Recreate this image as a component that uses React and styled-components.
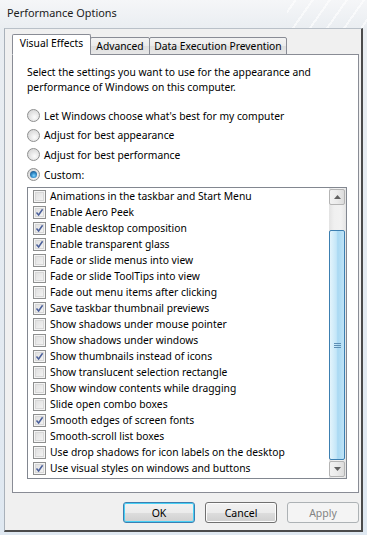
import React from "react";
import styled, { createGlobalStyle } from "styled-components";

const Global = createGlobalStyle`
  html, body { margin: 0; padding: 0; }
  body {
    width: 367px; height: 535px; overflow: hidden;
    font-family: "Noto Sans", "Open Sans", sans-serif;
    font-size: 10.3px;
    background: #e4ebf2;
  }
`;

const Window = styled.div`
  width: 367px; height: 535px; box-sizing: border-box;
  display: flex; flex-direction: column;
  background:
    repeating-linear-gradient(125deg, rgba(255,255,255,0) 0 6px, rgba(255,255,255,0.6) 6px 8px, rgba(255,255,255,0) 8px 14px) right top / 80px 28px no-repeat,
    linear-gradient(180deg, #f5f6f8 0%, #e9edf1 30px, #dfe8f1 100%);
`;

const TitleBar = styled.div`
  height: 28px; flex: none; display: flex; align-items: center;
  padding: 0 0 3px 7px; box-sizing: border-box;
  font-size: 10.9px; color: #1b1b1b;
`;

const Client = styled.div`
  flex: 1; margin: 0 4px 3px 4px;
  background: #f0f0f0;
  border-left: 1px solid #a9b1ba;
  border-top: 1px solid #b9c0c8;
  border-right: 2px solid #4b4b4b;
  border-bottom: 2px solid #4b4b4b;
  display: flex; flex-direction: column;
  padding: 6px 2px 0 7px;
`;

const TabRow = styled.div`
  display: flex; align-items: flex-end; height: 20px;
  margin-bottom: -1px; position: relative; z-index: 1;
`;

const Tab = styled.div`
  box-sizing: border-box; white-space: nowrap;
  width: ${p => p.$w}px;
  height: ${p => (p.$active ? "21px" : "18px")};
  margin-left: ${p => (p.$active ? "0" : "-1px")};
  border: 1px solid #898c95;
  border-bottom-color: ${p => (p.$active ? "#fff" : "#898c95")};
  border-radius: 2px 2px 0 0;
  background: ${p => (p.$active ? "#fff" : "linear-gradient(#f3f3f3, #ebebeb 50%, #dedede 51%, #e7e7e7)")};
  color: #000;
  display: flex; align-items: center; justify-content: center;
  padding-bottom: ${p => (p.$active ? "3px" : "1px")};
`;

const Panel = styled.div`
  box-sizing: border-box;
  width: 347px; height: 439px;
  background: #fff;
  border: 1px solid #898c95;
  padding: 10px 0 0 14px;
  display: flex; flex-direction: column;
`;

const Intro = styled.p`
  margin: 0; line-height: 15px; color: #000; width: 320px;
`;

const RadioGroup = styled.div`
  margin-top: 11px; display: flex; flex-direction: column;
`;

const RadioRow = styled.label`
  height: 19.6px; display: flex; align-items: center; gap: 4px;
  color: #000;
`;

const RadioDot = styled.span`
  width: 13px; height: 13px; box-sizing: border-box; border-radius: 50%;
  border: 1px solid #8e8f8f;
  background: radial-gradient(circle at 60% 65%, #fcfcfc 0%, #e6e6e6 45%, #cfcfcf 100%);
  display: flex; align-items: center; justify-content: center; flex: none;
  &::after {
    content: ""; display: ${p => (p.$on ? "block" : "none")};
    width: 7px; height: 7px; border-radius: 50%;
    background: radial-gradient(circle at 55% 65%, #7dd4ff 0%, #2f86c4 45%, #163f6a 100%);
  }
`;

const ListBox = styled.div`
  margin-top: 3px;
  width: 320px; height: 292px; box-sizing: border-box;
  border: 1px solid #828790;
  display: flex; background: #fff;
`;

const Items = styled.div`
  flex: 1; display: flex; flex-direction: column;
`;

const ItemRow = styled.div`
  height: 16px; display: flex; align-items: center; gap: 4px;
  padding-left: 5px; color: #000; white-space: nowrap;
`;

const CheckBox = styled.span`
  width: 13px; height: 13px; box-sizing: border-box; flex: none;
  border: 1px solid #8e8f8f;
  display: flex; align-items: center; justify-content: center;
  box-shadow: inset 0 0 0 1px #f4f4f4, inset 0 0 0 2px #d8d8d8;
  background: linear-gradient(135deg, #dcdcdc, #f7f7f7);
`;

const ScrollBar = styled.div`
  width: 17px; flex: none; box-sizing: border-box;
  background: linear-gradient(90deg, #e3e3e3, #f0f0f0 30%, #f2f2f2 70%, #e5e5e5);
  padding: 1px 1px 1px 0;
  display: flex; flex-direction: column;
`;

const ArrowBtn = styled.div`
  height: 16px; flex: none; box-sizing: border-box;
  border: 1px solid #b4b4b4; border-radius: 2px;
  background: linear-gradient(90deg, #f2f2f2, #ebebeb 50%, #dcdcdc);
  display: flex; align-items: center; justify-content: center;
`;

const Track = styled.div`
  flex: 1; display: flex; flex-direction: column;
  padding: 25px 0 1px 0;
`;

const Thumb = styled.div`
  flex: 1; box-sizing: border-box;
  border: 1px solid #3c7fb1; border-radius: 2px;
  background: linear-gradient(90deg, #e3f4fc, #c4e6f8 45%, #a9d9f3 55%, #bfe3f6);
  display: flex; align-items: center; justify-content: center;
`;

const Footer = styled.div`
  display: flex; justify-content: flex-end; gap: 10px;
  padding: 9px 0 0 0;
`;

const Button = styled.button`
  width: 72px; height: 21px; box-sizing: border-box;
  font-family: inherit; font-size: 10.5px; padding: 0;
  border-radius: 3px;
  border: 1px solid ${p => (p.$default ? "#3c7fb1" : p.disabled ? "#adb2b5" : "#707070")};
  color: ${p => (p.disabled ? "#838383" : "#000")};
  background: ${p => (p.disabled ? "#f4f4f4" : "linear-gradient(#f2f2f2, #ebebeb 50%, #dddddd 51%, #cfcfcf)")};
  box-shadow: ${p => (p.$default ? "inset 0 0 0 1px #48d0f5" : p.disabled ? "none" : "inset 0 0 0 1px #fcfcfc")};
`;

const items = [
  ["Animations in the taskbar and Start Menu", false],
  ["Enable Aero Peek", true],
  ["Enable desktop composition", true],
  ["Enable transparent glass", true],
  ["Fade or slide menus into view", false],
  ["Fade or slide ToolTips into view", false],
  ["Fade out menu items after clicking", false],
  ["Save taskbar thumbnail previews", true],
  ["Show shadows under mouse pointer", false],
  ["Show shadows under windows", false],
  ["Show thumbnails instead of icons", true],
  ["Show translucent selection rectangle", false],
  ["Show window contents while dragging", false],
  ["Slide open combo boxes", false],
  ["Smooth edges of screen fonts", true],
  ["Smooth-scroll list boxes", false],
  ["Use drop shadows for icon labels on the desktop", false],
  ["Use visual styles on windows and buttons", true],
];

const radios = [
  ["Let Windows choose what's best for my computer", false],
  ["Adjust for best appearance", false],
  ["Adjust for best performance", false],
  ["Custom:", true],
];

const Check = () => (
  <svg width="9" height="9" viewBox="0 0 9 9">
    <path d="M1.5 4.6 L3.6 7 L7.6 1.3" fill="none" stroke="#4a5f9a" strokeWidth="1.5" />
  </svg>
);

const Arrow = ({ up }) => (
  <svg width="7" height="4" viewBox="0 0 7 4">
    <path d={up ? "M0 4 L3.5 0 L7 4 Z" : "M0 0 L3.5 4 L7 0 Z"} fill="#606060" />
  </svg>
);

const Grip = () => (
  <svg width="7" height="7" viewBox="0 0 7 7">
    <path d="M0 1.5H7M0 3.5H7M0 5.5H7" stroke="#5e8fb5" strokeWidth="1" />
  </svg>
);

export default function App() {
  return (
    <>
      <Global />
      <Window>
        <TitleBar>Performance Options</TitleBar>
        <Client>
          <TabRow>
            <Tab $active $w={79}>Visual Effects</Tab>
            <Tab $w={60}>Advanced</Tab>
            <Tab $w={138}>Data Execution Prevention</Tab>
          </TabRow>
          <Panel>
            <Intro>
              Select the settings you want to use for the appearance and
              performance of Windows on this computer.
            </Intro>
            <RadioGroup>
              {radios.map(([t, on]) => (
                <RadioRow key={t}>
                  <RadioDot $on={on} />
                  {t}
                </RadioRow>
              ))}
            </RadioGroup>
            <ListBox>
              <Items>
                {items.map(([t, on]) => (
                  <ItemRow key={t}>
                    <CheckBox>{on && <Check />}</CheckBox>
                    {t}
                  </ItemRow>
                ))}
              </Items>
              <ScrollBar>
                <ArrowBtn><Arrow up /></ArrowBtn>
                <Track>
                  <Thumb><Grip /></Thumb>
                </Track>
                <ArrowBtn><Arrow /></ArrowBtn>
              </ScrollBar>
            </ListBox>
          </Panel>
          <Footer>
            <Button $default>OK</Button>
            <Button>Cancel</Button>
            <Button disabled>Apply</Button>
          </Footer>
        </Client>
      </Window>
    </>
  );
}
